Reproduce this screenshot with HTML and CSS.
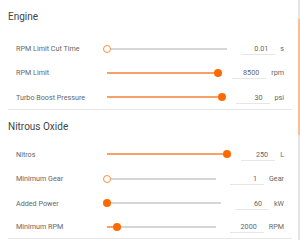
FILE: index.html
```html
<!DOCTYPE html>
<html>
<head>
<meta charset="utf-8">
<link rel="stylesheet" href="styles.css">
</head>
<body>
<div class="page">
  <section class="section section-engine">
    <h2 class="heading">Engine</h2>
    <div class="row">
      <span class="label">RPM Limit Cut Time</span>
      <div class="slider"><div class="track"><div class="fill" style="width:0%"></div></div><div class="thumb empty" style="left:0%"></div></div>
      <span class="value">0.01</span><span class="unit">s</span>
    </div>
    <div class="row">
      <span class="label">RPM Limit</span>
      <div class="slider"><div class="track"><div class="fill" style="width:100%"></div></div><div class="thumb" style="left:100%"></div></div>
      <span class="value">8500</span><span class="unit">rpm</span>
    </div>
    <div class="row">
      <span class="label">Turbo Boost Pressure</span>
      <div class="slider"><div class="track"><div class="fill" style="width:100%"></div></div><div class="thumb" style="left:100%"></div></div>
      <span class="value">30</span><span class="unit">psi</span>
    </div>
  </section>
  <section class="section section-nitrous">
    <h2 class="heading">Nitrous Oxide</h2>
    <div class="row">
      <span class="label">Nitros</span>
      <div class="slider"><div class="track"><div class="fill" style="width:100%"></div></div><div class="thumb" style="left:100%"></div></div>
      <span class="value">250</span><span class="unit">L</span>
    </div>
    <div class="row">
      <span class="label">Minimum Gear</span>
      <div class="slider"><div class="track"><div class="fill" style="width:0%"></div></div><div class="thumb empty" style="left:0%"></div></div>
      <span class="value">1</span><span class="unit">Gear</span>
    </div>
    <div class="row">
      <span class="label">Added Power</span>
      <div class="slider"><div class="track"><div class="fill" style="width:0%"></div></div><div class="thumb" style="left:0%"></div></div>
      <span class="value">60</span><span class="unit">kW</span>
    </div>
    <div class="row">
      <span class="label">Minimum RPM</span>
      <div class="slider"><div class="track"><div class="fill" style="width:9%"></div></div><div class="thumb" style="left:9%"></div></div>
      <span class="value">2000</span><span class="unit">RPM</span>
    </div>
  </section>
</div>
<div class="scrollbar"><div class="scroll-thumb"></div></div>
</body>
</html>
```
FILE: styles.css
```css
html, body {
  margin: 0;
  padding: 0;
  height: 240px;
  overflow: hidden;
  background: #fff;
}
body {
  display: flex;
  font-family: Roboto, "Liberation Sans", sans-serif;
}
.page {
  flex: 1;
  padding: 0 6px 0 8px;
}
.section {
  border-bottom: 1px solid #e6e6e6;
}
.section-engine {
  padding-top: 10px;
}
.section-nitrous {
  padding-top: 9.7px;
}
.heading {
  margin: 0;
  font-size: 10px;
  font-weight: 400;
  line-height: 14px;
  color: #444;
}
.section-engine .heading {
  margin-bottom: 12.4px;
}
.section-nitrous .heading {
  margin-bottom: 8.3px;
}
.row {
  display: flex;
  align-items: center;
  height: 24.3px;
  padding: 0 8px;
  font-size: 7.2px;
  color: #666;
}
.section-nitrous .row:last-child {
  height: 23px;
}
.label {
  width: 91px;
  flex: none;
  white-space: nowrap;
}
.slider {
  flex: 1;
  position: relative;
  height: 8px;
}
.track {
  position: absolute;
  left: 0;
  right: 0;
  top: 3px;
  height: 2px;
  background: #d6d6d6;
}
.fill {
  height: 100%;
  background: #f7a068;
}
.thumb {
  position: absolute;
  top: 0;
  width: 8px;
  height: 8px;
  margin-left: -4px;
  border-radius: 50%;
  background: #ff6a00;
  box-sizing: border-box;
}
.thumb.empty {
  background: #fff;
  border: 1.5px solid #f7913f;
}
.value {
  flex: none;
  width: 34px;
  height: 13px;
  line-height: 13px;
  margin-left: 14px;
  padding-right: 7px;
  box-sizing: border-box;
  text-align: right;
  border-bottom: 1px solid #e6e6e6;
  color: #666;
}
.unit {
  flex: none;
  margin-left: 5px;
  white-space: nowrap;
}
.scrollbar {
  width: 2px;
  flex: none;
  background: #e4e4e4;
  padding-top: 19px;
  box-sizing: border-box;
}
.scroll-thumb {
  height: 116px;
  background: #f9bd98;
}
```
